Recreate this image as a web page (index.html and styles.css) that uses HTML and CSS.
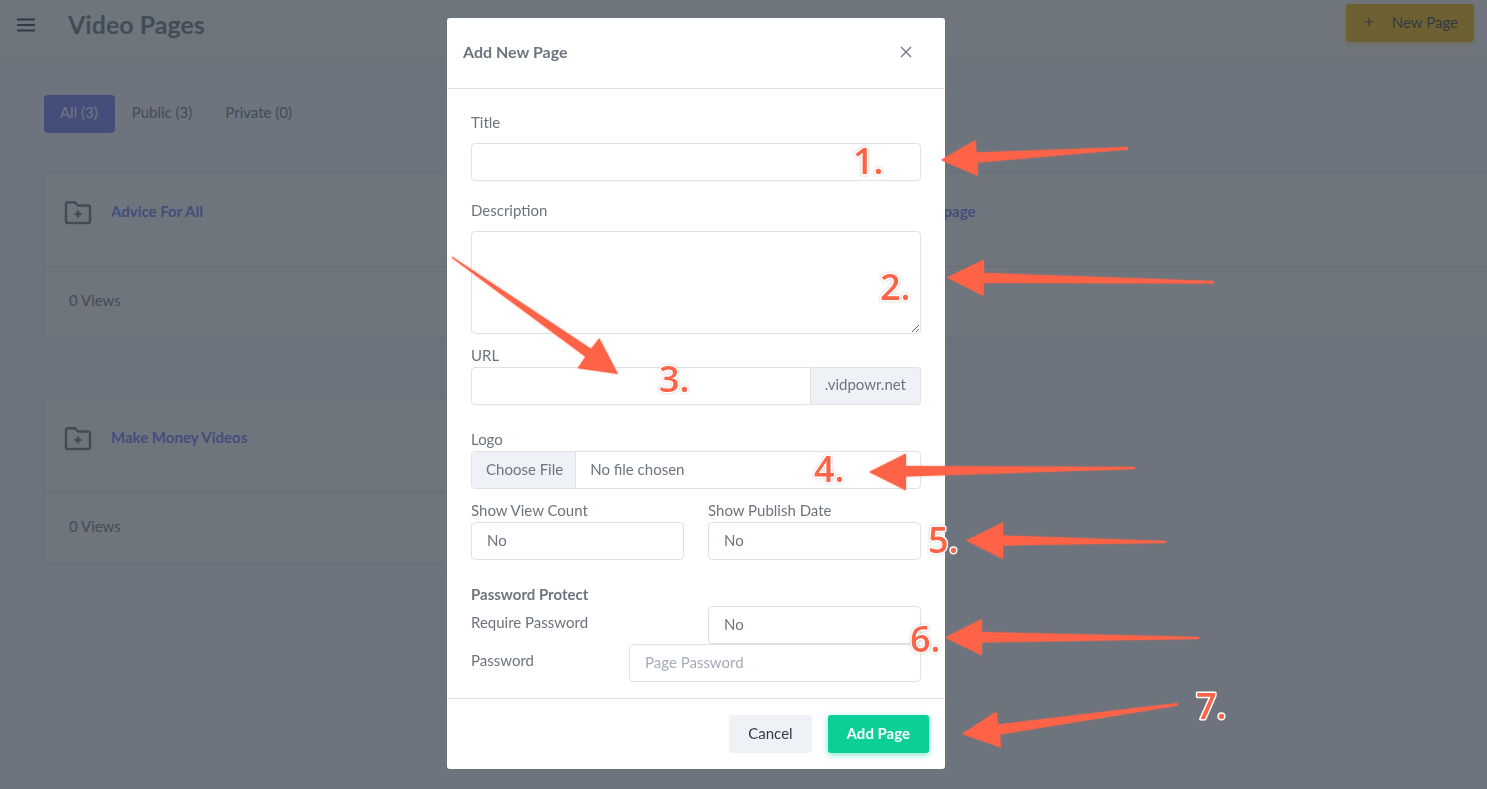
FILE: index.html
```html
<!DOCTYPE html>
<html lang="en">
<head>
<meta charset="utf-8">
<title>Video Pages</title>
<link rel="stylesheet" href="styles.css">
</head>
<body>
<div class="page">
  <header class="topbar">
    <button class="menu-button" type="button" aria-label="Menu">
      <svg width="20" height="14" viewBox="0 0 20 14"><path d="M1 1.5h18M1 7h18M1 12.5h18" stroke="#313a46" stroke-width="2"/></svg>
    </button>
    <h1 class="page-title">Video Pages</h1>
    <button class="btn btn-warning" type="button">
      <svg width="10" height="10" viewBox="0 0 10 10" aria-hidden="true"><path d="M5 0.5v9M0.5 5h9" stroke="#313a46" stroke-width="1.2"/></svg>
      <span>New Page</span>
    </button>
  </header>
  <main class="content">
    <nav class="tabs">
      <a class="tab tab-active" href="#all">All (3)</a>
      <a class="tab" href="#public">Public (3)</a>
      <a class="tab" href="#private">Private (0)</a>
    </nav>
    <div class="cards">
      <article class="card">
        <div class="card-head">
          <svg class="folder" viewBox="0 0 28 26"><path d="M4 2.2h6.8l3.2 3.4h10q2 0 2 2v13.400q0 2-2 2H4q-2 0-2-2V4.200q0-2 2-2z"/><path d="M14 10.500v7M10.500 14h7"/></svg>
          <a class="card-title" href="#advice">Advice For All</a>
        </div>
        <div class="card-foot">0 Views</div>
      </article>
      <article class="card">
        <div class="card-head">
          <svg class="folder" viewBox="0 0 28 26"><path d="M4 2.2h6.8l3.2 3.4h10q2 0 2 2v13.400q0 2-2 2H4q-2 0-2-2V4.200q0-2 2-2z"/><path d="M14 10.500v7M10.500 14h7"/></svg>
          <a class="card-title card-title-end" href="#page">page</a>
        </div>
        <div class="card-foot">0 Views</div>
      </article>
      <article class="card">
        <div class="card-head">
          <svg class="folder" viewBox="0 0 28 26"><path d="M4 2.2h6.8l3.2 3.4h10q2 0 2 2v13.400q0 2-2 2H4q-2 0-2-2V4.200q0-2 2-2z"/><path d="M14 10.500v7M10.500 14h7"/></svg>
          <a class="card-title" href="#money">Make Money Videos</a>
        </div>
        <div class="card-foot">0 Views</div>
      </article>
    </div>
  </main>
</div>

<div class="backdrop">
  <form class="modal" role="dialog" aria-labelledby="modal-title">
    <div class="modal-header">
      <h2 class="modal-title" id="modal-title">Add New Page</h2>
      <button class="close" type="button" aria-label="Close">
        <svg width="12" height="12" viewBox="0 0 12 12"><path d="M1 1l10 10M11 1L1 11" stroke="#6c757d" stroke-width="1.300"/></svg>
      </button>
    </div>
    <div class="modal-body">
      <div class="field field-open">
        <label for="title">Title</label>
        <input class="control" id="title" type="text">
      </div>
      <div class="field field-open field-area">
        <label for="description">Description</label>
        <textarea class="control area" id="description"></textarea>
      </div>
      <div class="field field-wide">
        <label for="url">URL</label>
        <div class="group">
          <input class="control" id="url" type="text">
          <span class="addon">.vidpowr.net</span>
        </div>
      </div>
      <div class="field">
        <label for="logo">Logo</label>
        <input class="control file" id="logo" type="file">
      </div>
      <div class="field field-wide pair">
        <div>
          <label for="views">Show View Count</label>
          <select class="control" id="views"><option>No</option><option>Yes</option></select>
        </div>
        <div>
          <label for="date">Show Publish Date</label>
          <select class="control" id="date"><option>No</option><option>Yes</option></select>
        </div>
      </div>
      <h3 class="section">Password Protect</h3>
      <div class="pair">
        <label class="row-label" for="require">Require Password</label>
        <select class="control" id="require"><option>No</option><option>Yes</option></select>
      </div>
      <div class="password-row">
        <label class="row-label" for="password">Password</label>
        <input class="control" id="password" type="text" placeholder="Page Password">
      </div>
    </div>
    <div class="modal-footer">
      <button class="btn btn-light" type="button">Cancel</button>
      <button class="btn btn-success" type="button">Add Page</button>
    </div>
  </form>
</div>

<svg class="notes" width="1487" height="789" viewBox="0 0 1487 789">
  <g class="arrows">
    <path d="M941 160L975.500 140L976.500 152.500L1128 147V149.500L977.500 162.500L978 176Z"/>
    <path d="M947 277.500L984 259.500V273L1214 281V283.500L984 283L983.500 296Z"/>
    <path d="M618 374L599.300 338.300L591 348.700L452 256.500L452 258L585.300 356.700L577.700 368.300Z"/>
    <path d="M869 472L906 453.500V466L1135 467V469L906 476.500V490.500Z"/>
    <path d="M966 540.500L1003 522.500V535.500L1166 541V543L1003 545.500V559Z"/>
    <path d="M945 637.500L982 619V632L1199 637V639L982 642.500V655.500Z"/>
    <path d="M962 734L996.500 711.500L998 724.500L1178 703V705.500L1000 734.500L1001 747.500Z"/>
  </g>
  <g class="numbers">
    <text x="853" y="174">1.</text>
    <text x="880" y="300">2.</text>
    <text x="659" y="392">3.</text>
    <text x="814" y="482">4.</text>
    <text x="928" y="553">5.</text>
    <text x="910" y="652">6.</text>
    <text x="1196" y="719">7.</text>
  </g>
</svg>
</body>
</html>
```
FILE: styles.css
```css
* { box-sizing: border-box; }

body {
  margin: 0;
  background: #fafbfe;
  color: #6c757d;
  font: 15px/22px Lato, "Open Sans", sans-serif;
  overflow: hidden;
}

button, input, select, textarea { font: inherit; color: inherit; }
h1, h2, h3 { margin: 0; }
a { text-decoration: none; color: inherit; }

.page { min-height: 100vh; }

.topbar {
  display: flex;
  align-items: flex-start;
  height: 59px;
  padding: 4px 13px 0 16px;
  background: #fff;
  box-shadow: 0 0 8px rgba(49, 58, 70, 0.1);
}

.menu-button {
  display: flex;
  width: 52px;
  padding: 14px 0 0;
  border: 0;
  background: none;
}

.page-title { flex: 1; font-size: 25px; line-height: 40px; }

.btn {
  display: flex;
  align-items: center;
  height: 38px;
  padding: 0 19px 3px;
  border: 0;
  border-radius: 3px;
}

.btn-warning {
  gap: 18px;
  padding: 0 16px 3px 18px;
  background: #ffbc00;
  color: #313a46;
  box-shadow: 0 2px 6px rgba(255, 188, 0, 0.5);
}

.content { padding: 36px 0 0 44px; }

.tabs { display: flex; gap: 1px; }
.tab { padding: 6px 16px 10px; border-radius: 4px; }
.tab-active { padding: 6px 17px 10px 16px; background: #727cf5; color: #fff; }

.cards {
  display: grid;
  grid-template-columns: 1fr 1fr;
  gap: 60px 24px;
  margin: 39px -24px 0 0;
}

.card {
  border: 1px solid #e8ecf4;
  border-radius: 4px;
  background: #fff;
  box-shadow: 0 0 12px rgba(154, 161, 171, 0.15);
}

.card-head {
  display: flex;
  align-items: flex-start;
  gap: 19px;
  height: 93px;
  padding: 27px 19px;
}

.folder {
  width: 28px;
  height: 26px;
  fill: none;
  stroke: #6c757d;
  stroke-width: 2.500;
}

.card-title { color: #727cf5; font-weight: 700; }
.card-title-end { min-width: 119px; text-align: right; }
.card-foot { height: 71px; padding: 22px 24px; border-top: 1px solid #dee2e6; }

.backdrop {
  position: fixed;
  inset: 0;
  display: flex;
  justify-content: center;
  align-items: flex-start;
  padding: 18px 95px 0 0;
  background: rgba(49, 58, 70, 0.7);
}

.modal {
  width: 498px;
  border-radius: 3px;
  background: #fff;
}

.modal-header {
  display: flex;
  justify-content: space-between;
  padding: 23px 33px 25px 16px;
  border-bottom: 1px solid #dee2e6;
}

.modal-title { font-size: 16px; line-height: 22px; }
.close { display: flex; align-items: center; padding: 0; border: 0; background: none; }

.modal-body { padding: 24px 24px 16px; }
.modal-body label { display: block; line-height: 20px; }

.field { margin-bottom: 11px; }
.field label { margin-bottom: 2px; }
.field-open { margin-bottom: 20px; }
.field-open label { margin: -1px 0 11px; }
.field-area { margin-bottom: 11px; }
.field-wide { margin-bottom: 24px; }

.control {
  display: block;
  width: 100%;
  height: 38px;
  padding: 6px 14px 8px 15px;
  border: 1px solid #dee2e6;
  border-radius: 4px;
  background: #fff;
  appearance: none;
}
.control::placeholder { color: #a5adb8; }

.area { height: 103px; resize: vertical; }

.group { display: flex; }
.group .control { flex: 1; min-width: 0; border-radius: 4px 0 0 4px; }

.addon {
  padding: 5px 14px 9px;
  border: 1px solid #dee2e6;
  border-left: 0;
  border-radius: 0 4px 4px 0;
  background: #eef2f7;
}

.control.file { padding: 0; overflow: hidden; line-height: 34px; }
.file::file-selector-button {
  height: 36px;
  margin: 0 14px 0 0;
  padding: 0 12px 2px 14px;
  border: 0;
  border-right: 1px solid #dee2e6;
  background: #eef2f7;
  color: inherit;
  font: inherit;
}

.pair { display: grid; grid-template-columns: 1fr 1fr; gap: 24px; }
.section { padding-bottom: 2px; font-size: 15px; line-height: 20px; }
.row-label { padding-top: 6px; }

.password-row { display: grid; grid-template-columns: 1fr 292px; }

.modal-footer {
  display: flex;
  justify-content: flex-end;
  gap: 16px;
  padding: 16px;
  border-top: 1px solid #dee2e6;
}

.btn-light { background: #eef2f7; color: #313a46; }
.btn-success {
  background: #0acf97;
  color: #fff;
  font-weight: 700;
  box-shadow: 0 2px 6px rgba(10, 207, 151, 0.5);
}

.notes { position: fixed; top: 0; left: 0; pointer-events: none; }
.arrows { fill: #ff6347; filter: drop-shadow(0 0 1px rgba(255, 99, 71, 0.6)); }
.numbers {
  fill: #ff6347;
  stroke: #fff;
  stroke-width: 3px;
  stroke-linejoin: round;
  paint-order: stroke;
  font: 600 36px "Open Sans", sans-serif;
  filter: drop-shadow(0 0 1px rgba(120, 100, 80, 0.4));
}
```
